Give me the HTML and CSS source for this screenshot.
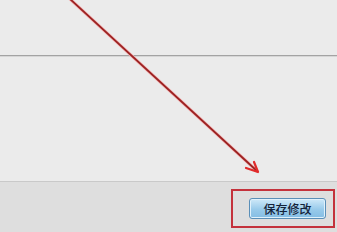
FILE: index.html
```html
<!DOCTYPE html>
<html lang="zh-CN">
<head>
    <meta charset="UTF-8">
    <title>保存修改</title>
    <link rel="stylesheet" href="styles.css">
</head>
<body>
    <div class="page_box">
        <div class="content_box">
            <div class="divider"></div>
        </div>
        <div class="footer_bar">
            <div class="mark_box">
                <button class="save_btn">保存修改</button>
            </div>
        </div>
        <!-- 标注箭头 -->
        <svg class="arrow_svg" width="337" height="232" viewBox="0 0 337 232">
            <line x1="70" y1="-1" x2="257" y2="171" stroke="#f4b8b8" stroke-width="3.2" stroke-linecap="round"/>
            <line x1="70" y1="-1" x2="257" y2="171" stroke="#9c2222" stroke-width="1.8" stroke-linecap="round"/>
            <path d="M246 168 L258 172 L254 162" fill="none" stroke="#e02a2a" stroke-width="2.2" stroke-linecap="round" stroke-linejoin="round"/>
        </svg>
    </div>
</body>
</html>
```
FILE: styles.css
```css
* {
    margin: 0;
    padding: 0;
    box-sizing: border-box;
}
body {
    background-color: #ebebeb;
    font-family: "Noto Sans CJK SC", "Noto Sans", sans-serif;
}
.page_box {
    position: relative;
    width: 337px;
    height: 232px;
    overflow: hidden;
}
/* 上半部分 */
.content_box {
    height: 181px;
    padding-top: 55px;
    background-color: #ebebeb;
}
.divider {
    height: 2px;
    border-top: 1px solid #a3a3a3;
    border-bottom: 1px solid #d6d6d6;
}
/* 底部按钮栏 */
.footer_bar {
    display: flex;
    justify-content: flex-end;
    align-items: flex-start;
    height: 51px;
    padding-top: 7px;
    padding-right: 2px;
    background-color: #dedede;
    border-top: 1px solid #c9c9c9;
}
.mark_box {
    width: 104px;
    height: 39px;
    padding: 7px 7px 7px 16px;
    border: 2px solid #c4323c;
}
.save_btn {
    display: flex;
    align-items: center;
    justify-content: center;
    width: 77px;
    height: 21px;
    font-family: inherit;
    font-size: 12px;
    font-weight: 500;
    color: #142238;
    background: linear-gradient(#cfe9f9, #98caea 55%, #84bde4);
    border: 1px solid #5a8fb8;
    border-radius: 3px;
    box-shadow: inset 0 0 0 1px #e0f1fb;
}
.arrow_svg {
    position: absolute;
    left: 0;
    top: 0;
    pointer-events: none;
}
```
